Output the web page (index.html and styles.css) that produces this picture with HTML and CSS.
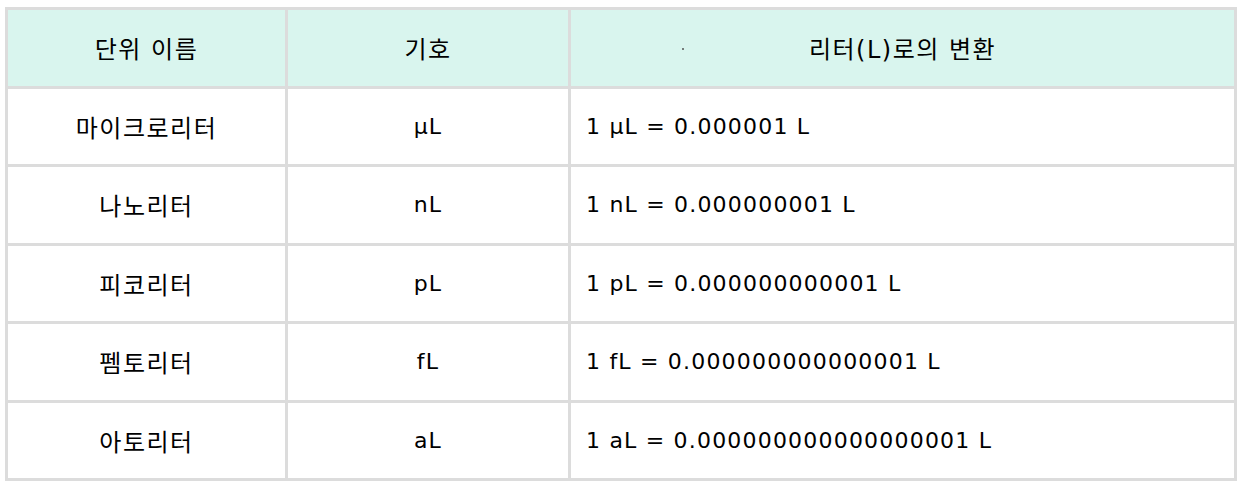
FILE: index.html
```html
<!DOCTYPE html>
<html lang="ko">
<head>
<meta charset="utf-8">
<link rel="stylesheet" href="styles.css">
</head>
<body>
<div class="wrap">
<table class="units">
  <colgroup>
    <col class="c1"><col class="c2"><col class="c3">
  </colgroup>
  <thead>
    <tr><th>단위 이름</th><th>기호</th><th class="conv-h"><span class="dot"></span>리터(L)로의 변환</th></tr>
  </thead>
  <tbody>
    <tr><td class="name">마이크로리터</td><td>μL</td><td class="conv">1 μL = 0.000001 L</td></tr>
    <tr><td class="name">나노리터</td><td>nL</td><td class="conv">1 nL = 0.000000001 L</td></tr>
    <tr><td class="name">피코리터</td><td>pL</td><td class="conv">1 pL = 0.000000000001 L</td></tr>
    <tr><td class="name">펨토리터</td><td>fL</td><td class="conv">1 fL = 0.000000000000001 L</td></tr>
    <tr><td class="name">아토리터</td><td>aL</td><td class="conv">1 aL = 0.000000000000000001 L</td></tr>
  </tbody>
</table>
</div>
</body>
</html>
```

FILE: styles.css
```css
html, body {
  margin: 0;
  padding: 0;
  background: #ffffff;
}
.wrap {
  padding: 7px 8px 0 5px;
}
.units {
  width: 100%;
  border-collapse: collapse;
  font-family: "DejaVu Sans", "Noto Sans CJK KR", sans-serif;
  font-size: 22px;
  letter-spacing: 1.2px;
  color: #000;
}
.c1 { width: 280px; }
.c2 { width: 283px; }
.units th, .units td {
  border: 3px solid #dcdcdc;
  height: 75.5px;
  padding: 0;
  text-align: center;
  vertical-align: middle;
  font-weight: normal;
}
.units th {
  background: #d9f5ee;
  font-size: 24px;
  letter-spacing: 1.5px;
}
.units td.name {
  font-size: 24px;
  letter-spacing: 1.5px;
}
.units td.conv {
  text-align: left;
  padding-left: 15px;
}
.conv-h {
  position: relative;
}
.dot {
  position: absolute;
  left: 111px;
  top: 38px;
  width: 2px;
  height: 2px;
  background: #555;
  border-radius: 50%;
}
```
